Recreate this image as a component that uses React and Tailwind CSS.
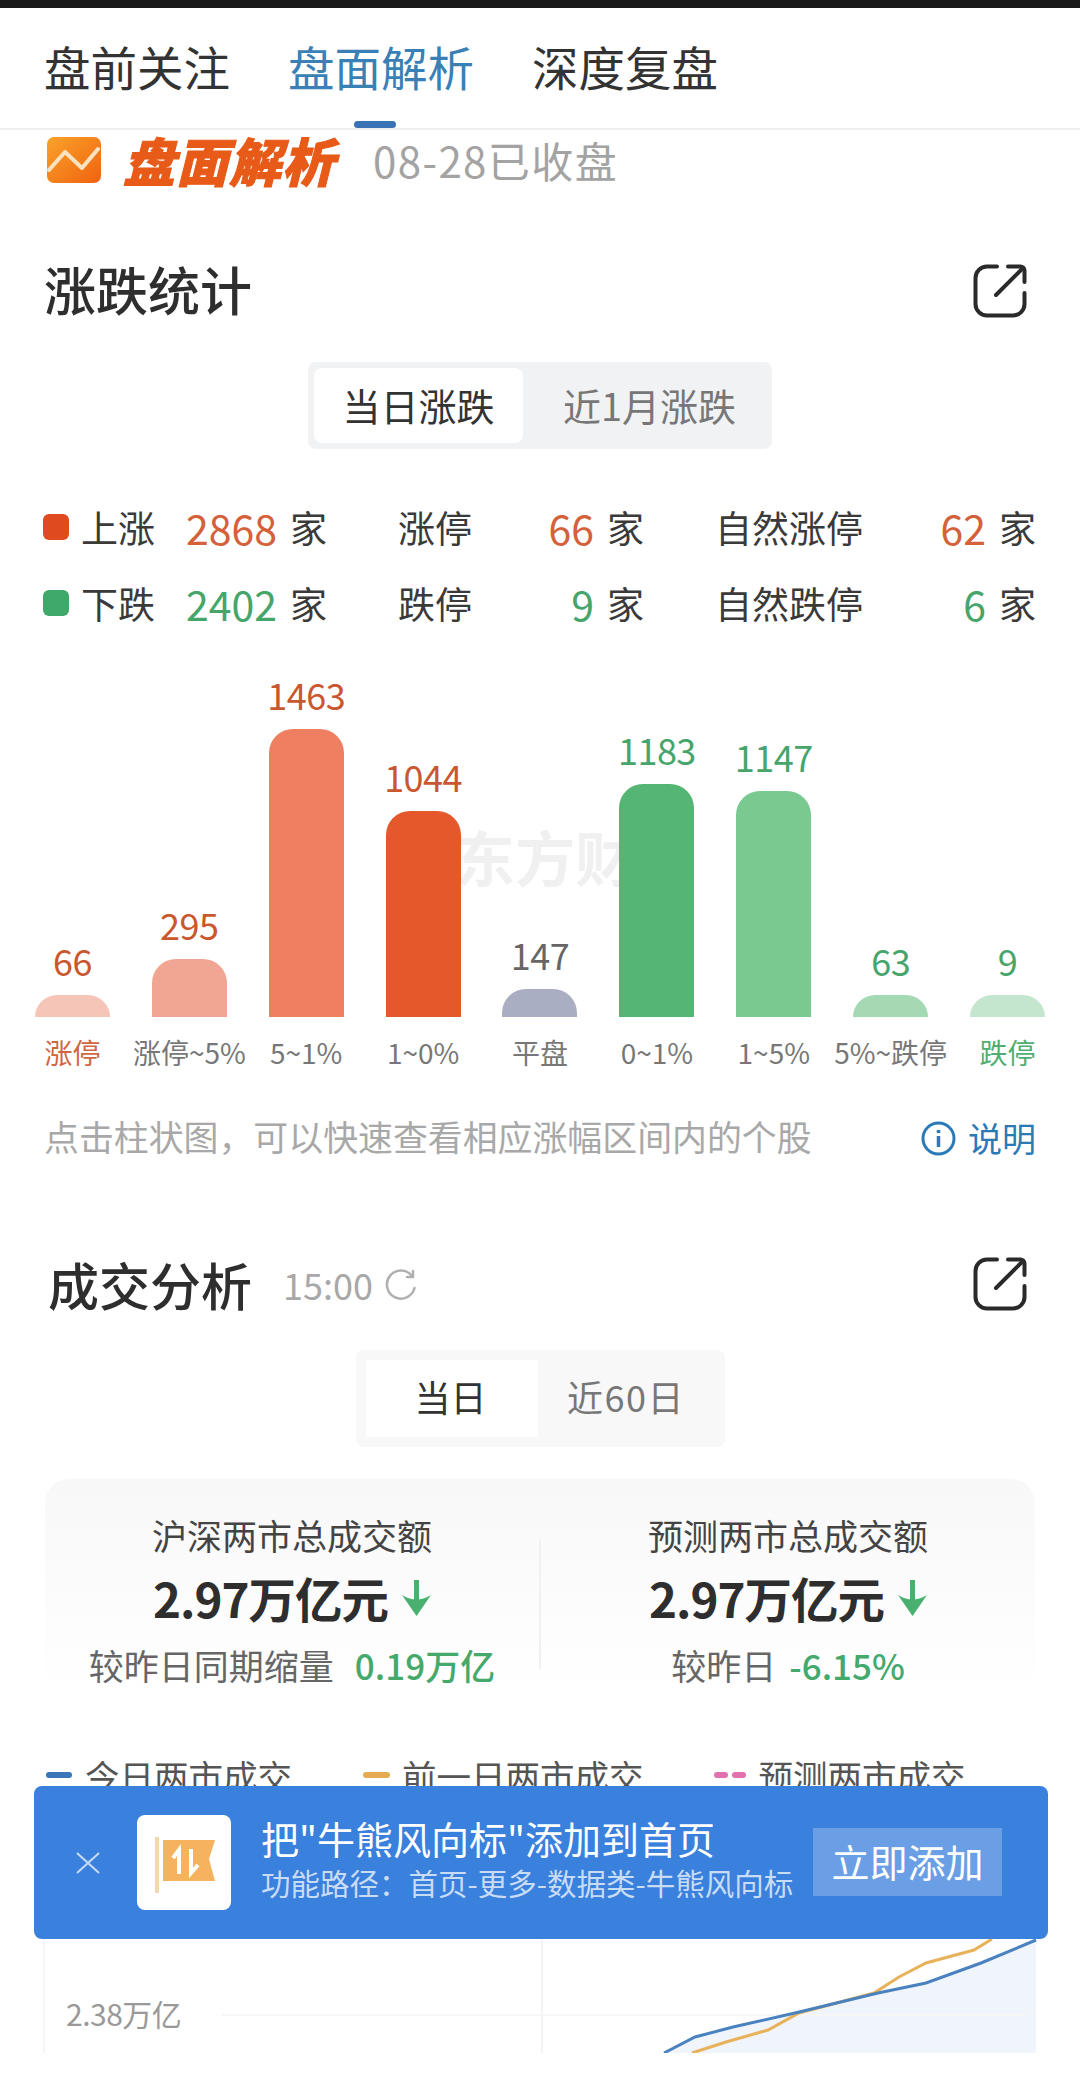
const bars = [
  { v: '66', l: '涨停', h: 22, c: 'bg-[#f5c5b8]', vc: 'text-[#c9572f]', lc: 'text-[#d0663f]' },
  { v: '295', l: '涨停~5%', h: 58, c: 'bg-[#f0a692]', vc: 'text-[#c9572f]', lc: 'text-[#777777]' },
  { v: '1463', l: '5~1%', h: 288, c: 'bg-[#ee8061]', vc: 'text-[#c9572f]', lc: 'text-[#777777]' },
  { v: '1044', l: '1~0%', h: 206, c: 'bg-[#e5582c]', vc: 'text-[#c9572f]', lc: 'text-[#777777]' },
  { v: '147', l: '平盘', h: 28, c: 'bg-[#aaaec3]', vc: 'text-[#666666]', lc: 'text-[#777777]' },
  { v: '1183', l: '0~1%', h: 233, c: 'bg-[#54b574]', vc: 'text-[#46a56a]', lc: 'text-[#777777]' },
  { v: '1147', l: '1~5%', h: 226, c: 'bg-[#7ac991]', vc: 'text-[#46a56a]', lc: 'text-[#777777]' },
  { v: '63', l: '5%~跌停', h: 22, c: 'bg-[#a4d9b4]', vc: 'text-[#46a56a]', lc: 'text-[#777777]' },
  { v: '9', l: '跌停', h: 22, c: 'bg-[#c4e6cf]', vc: 'text-[#46a56a]', lc: 'text-[#4fae72]' },
];

function ShareIcon() {
  return (
    <svg width="54" height="54" viewBox="0 0 54 54" fill="none" stroke="#2a2a2a" strokeWidth="4" strokeLinecap="round" strokeLinejoin="round">
      <path d="M24 2.5H14A11.5 11.5 0 0 0 2.500 14V40A11.500 11.500 0 0 0 14 51.500H40A11.500 11.500 0 0 0 51.500 40V29" />
      <path d="M23 31L50 4" />
      <path d="M35 2.500H47.500A4 4 0 0 1 51.500 6.500V18" />
    </svg>
  );
}

function DownArrow() {
  return (
    <svg width="29" height="36" viewBox="0 0 29 36">
      <rect x="12" y="0" width="5" height="24" fill="#49b06f" />
      <path d="M0 15C6 18.500 10 19.500 14.500 19.500C19 19.500 23 18.500 29 15L14.500 36Z" fill="#49b06f" />
    </svg>
  );
}

function Stat({ title, tail, tailCls, lg }) {
  return (
    <div className="flex-1 flex flex-col items-center">
      <div className="text-[35px] leading-[44px] text-[#444444] mt-[34px]">{title}</div>
      <div className="flex items-center mt-[18px] h-[46px]">
        <span className="text-[47.500px] leading-[46px] font-bold text-[#2e2e2e] tracking-[-1px]">2.97万亿元</span>
        <span className="ml-[14px] flex"><DownArrow /></span>
      </div>
      <div className="flex items-center mt-[22px] text-[35px] leading-[44px]">
        <span className="text-[#666666]">{lg}</span>
        <span className={`font-medium text-[#45a96c] ${tailCls}`}>{tail}</span>
      </div>
    </div>
  );
}

function Group({ label, num, color, cls }) {
  return (
    <div className={`flex items-center justify-between ${cls}`}>
      <span className="text-[37px] text-[#3a3a3a] leading-[44px]">{label}</span>
      <span className="flex items-center gap-[13px]">
        <span className={`text-[41px] leading-[44px] ${color}`}>{num}</span>
        <span className="text-[37px] text-[#3a3a3a] leading-[44px]">家</span>
      </span>
    </div>
  );
}

export default function App() {
  return (
    <div className="relative w-[1080px] h-[2090px] overflow-hidden bg-white font-['Noto_Sans_CJK_SC','Noto_Sans',sans-serif]">
      <div className="h-[8px] bg-[#1a1a1a]" />

      <div className="relative h-[122px] border-b-2 border-[#efefef] flex items-start pl-[44px] pt-[24px] gap-[58px] text-[46.500px] leading-[68px]">
        <span className="text-[#333333]">盘前关注</span>
        <span className="text-[#3a7fb5]">盘面解析</span>
        <span className="text-[#333333]">深度复盘</span>
        <div className="absolute left-[354px] top-[113px] w-[42px] h-[7px] rounded-full bg-[#3a72b5]" />
      </div>

      <div className="flex items-center h-[48px] mt-[6px] pl-[47px]">
        <svg width="54" height="46" viewBox="0 0 54 46">
          <defs>
            <linearGradient id="logoGrad" x1="0" y1="0" x2="1" y2="1">
              <stop offset="0" stopColor="#f9a32a" />
              <stop offset="1" stopColor="#f0620f" />
            </linearGradient>
          </defs>
          <rect width="54" height="46" rx="7" fill="url(#logoGrad)" />
          <path d="M2 33L18 15L35 31L51 12" fill="none" stroke="#fbe3c2" strokeWidth="4" strokeLinecap="round" strokeLinejoin="round" />
        </svg>
        <span className="ml-[22px] text-[52px] leading-[48px] font-black italic text-[#e85a17] tracking-[1px] [-webkit-text-stroke:1px_#e85a17]">盘面解析</span>
        <span className="ml-[38px] text-[42px] leading-[48px] text-[#a3a3a3] tracking-[1.4px]">08-28已收盘</span>
      </div>

      <div className="flex items-center justify-between h-[54px] mt-[80px] pl-[44px] pr-[53px]">
        <span className="text-[52px] leading-[54px] font-medium text-[#2e2e2e] pb-[5px]">涨跌统计</span>
        <ShareIcon />
      </div>

      <div className="flex justify-center mt-[44px]">
        <div className="flex w-[464px] h-[87px] p-[6px] rounded-[8px] bg-[#f1f2f4] text-[38px]">
          <div className="w-[209px] flex items-center justify-center pb-[2px] rounded-[8px] bg-white text-[#333333]">当日涨跌</div>
          <div className="flex-1 flex items-center justify-center pl-[10px] pb-[2px] text-[#777777]">近1月涨跌</div>
        </div>
      </div>

      <div className="mt-[56px] pl-[43px] pr-[44px]">
        <div className="flex items-center h-[44px] justify-between">
          <div className="w-[26px] h-[26px] rounded-[6px] bg-[#e04a1f]" />
          <Group label="上涨" num="2868" color="text-[#d4613a]" cls="w-[246px] ml-[12px]" />
          <Group label="涨停" num="66" color="text-[#d4613a]" cls="w-[246px] ml-[71px]" />
          <Group label="自然涨停" num="62" color="text-[#d4613a]" cls="w-[321px] ml-[71px]" />
        </div>
        <div className="flex items-center h-[44px] justify-between mt-[32px]">
          <div className="w-[26px] h-[26px] rounded-[6px] bg-[#3fa96a]" />
          <Group label="下跌" num="2402" color="text-[#46a56a]" cls="w-[246px] ml-[12px]" />
          <Group label="跌停" num="9" color="text-[#46a56a]" cls="w-[246px] ml-[71px]" />
          <Group label="自然跌停" num="6" color="text-[#46a56a]" cls="w-[321px] ml-[71px]" />
        </div>
      </div>

      <div className="relative mt-[49px] mx-[14px] h-[343px] grid grid-cols-9">
        <div className="absolute left-[441px] top-[148px] text-[60px] leading-[68px] font-bold text-[#f0f0f1] whitespace-nowrap">东方财</div>
        {bars.map((b) => (
          <div key={b.l} className="relative flex flex-col items-center justify-end">
            <div className={`text-[36px] leading-[40px] mb-[15px] tracking-[-0.5px] ${b.vc}`}>{b.v}</div>
            <div className={`w-[75px] rounded-t-[24px] ${b.c}`} style={{ height: b.h }} />
          </div>
        ))}
      </div>
      <div className="grid grid-cols-9 mx-[14px] mt-[15px]">
        {bars.map((b) => (
          <div key={b.l} className={`text-center text-[28px] leading-[40px] whitespace-nowrap ${b.lc}`}>{b.l}</div>
        ))}
      </div>

      <div className="flex items-center justify-between mt-[39px] pl-[44px] pr-[44px] h-[50px]">
        <span className="text-[34.900px] text-[#a8a8a8] leading-[44px]">点击柱状图，可以快速查看相应涨幅区间内的个股</span>
        <span className="flex items-center gap-[12px] mt-[4px] text-[34px] text-[#2a7ab8] leading-[44px]">
          <svg width="35" height="35" viewBox="0 0 35 35" fill="none" stroke="#2a7ab8" strokeWidth="3">
            <circle cx="17.500" cy="17.500" r="15.500" />
            <path d="M17.500 15V26" strokeWidth="3.500" />
            <path d="M17.500 9V12" strokeWidth="3.500" />
          </svg>
          说明
        </span>
      </div>

      <div className="flex items-center h-[54px] mt-[96px] pl-[48px] pr-[53px]">
        <span className="text-[51px] leading-[54px] font-medium text-[#2e2e2e]">成交分析</span>
        <span className="ml-[31px] text-[36px] leading-[54px] text-[#a8a8a8]">15:00</span>
        <svg className="ml-[12px] mr-auto" width="32" height="32" viewBox="0 0 32 32" fill="none" stroke="#b0b0b0" strokeWidth="2.500" strokeLinecap="round">
          <path d="M27 8A14 14 0 1 0 29.500 20" />
          <path d="M28 3V9H22" />
        </svg>
        <ShareIcon />
      </div>

      <div className="flex justify-center mt-[39px]">
        <div className="flex w-[369px] h-[97px] p-[10px] rounded-[8px] bg-[#f8f8f9] text-[36px]">
          <div className="w-[172px] flex items-center justify-center pb-[6px] pr-[2px] bg-white text-[#333333]">当日</div>
          <div className="flex-1 flex items-center justify-center pb-[6px] tracking-[1.5px] text-[#777777]">近60日</div>
        </div>
      </div>

      <div className="flex mt-[32px] mx-[45px] h-[220px] rounded-t-[24px] bg-gradient-to-b from-[#f8f8f9] to-white">
        <Stat title="沪深两市总成交额" lg="较昨日同期缩量" tail="0.19万亿" tailCls="ml-[21px]" />
        <div className="w-[2px] h-[130px] mt-[60px] bg-[#f1f1f1]" />
        <Stat title="预测两市总成交额" lg="较昨日" tail="-6.15%" tailCls="ml-[13px]" />
      </div>

      <div className="flex items-center h-[44px] mt-[54px] pl-[46px] text-[34.500px] leading-[44px] text-[#555555]">
        <span className="w-[26px] h-[6px] rounded-full bg-[#3a76b8]" />
        <span className="ml-[13px]">今日两市成交</span>
        <span className="ml-[71px] w-[27px] h-[6px] rounded-full bg-[#e5ab52]" />
        <span className="ml-[12px]">前一日两市成交</span>
        <span className="ml-[70px] flex gap-[4px]">
          <span className="w-[14px] h-[6px] rounded-full bg-[#e271b0]" />
          <span className="w-[14px] h-[6px] rounded-full bg-[#e271b0]" />
        </span>
        <span className="ml-[13px]">预测两市成交</span>
      </div>

      <div className="relative mx-[43px] h-[256px] border-l-2 border-[#f5f5f5]">
        <svg className="absolute left-0 top-0" width="1000" height="256" viewBox="43 1797 1000 256">
          <path d="M662 2053L693 2037L731 2027L793 2013L876 1993L924 1983L979 1963L1034 1940V2053Z" fill="#f0f4fb" />
          <path d="M540 1800V2053" stroke="#f3f3f3" strokeWidth="2" />
          <path d="M220 2015H1025" stroke="#f6f6f6" strokeWidth="2" />
          <path d="M690 2053L724 2042L766 2030L797 2013L872 1993L897 1977L924 1963L972 1950L990 1939" fill="none" stroke="#e8b25a" strokeWidth="3" />
          <path d="M662 2053L693 2037L731 2027L793 2013L876 1993L924 1983L979 1963L1034 1940" fill="none" stroke="#4a82c0" strokeWidth="3" />
        </svg>
        <span className="absolute left-[21px] top-[198px] text-[30px] leading-[36px] text-[#999999] tracking-[-0.5px]">2.38万亿</span>
      </div>

      <div className="absolute left-[34px] top-[1786px] w-[1014px] h-[153px] rounded-[8px] bg-[#3a80dd] flex items-center">
        <svg className="ml-[42px]" width="24" height="22" viewBox="0 0 24 22" fill="none" stroke="#c9dcf6" strokeWidth="2">
          <path d="M1 1L23 21M23 1L1 21" />
        </svg>
        <div className="ml-[37px] w-[94px] h-[95px] rounded-[8px] bg-white flex items-center justify-center">
          <svg width="64" height="60" viewBox="0 0 64 60">
            <rect x="3" y="4" width="4" height="56" fill="#f3d7ae" />
            <path d="M11 7H63L57 26L63 48H11Z" fill="#f6b35f" />
            <path d="M27 41V17L21 25" fill="none" stroke="#ffffff" strokeWidth="4" />
            <path d="M39 16V40L46 32" fill="none" stroke="#ffffff" strokeWidth="4" />
          </svg>
        </div>
        <div className="ml-[30px] w-[540px] mb-[12px] flex flex-col">
          <span className="text-[38px] leading-[48px] text-white whitespace-nowrap">把"牛熊风向标"添加到首页</span>
          <span className="text-[29.500px] leading-[36px] mt-[2px] text-[#c9dcf6] whitespace-nowrap">功能路径：首页-更多-数据类-牛熊风向标</span>
        </div>
        <div className="ml-[12px] w-[189px] h-[68px] pb-[3px] mb-[1px] bg-[#6a9fe5] flex items-center justify-center text-[38px] text-white">立即添加</div>
      </div>
    </div>
  );
}
